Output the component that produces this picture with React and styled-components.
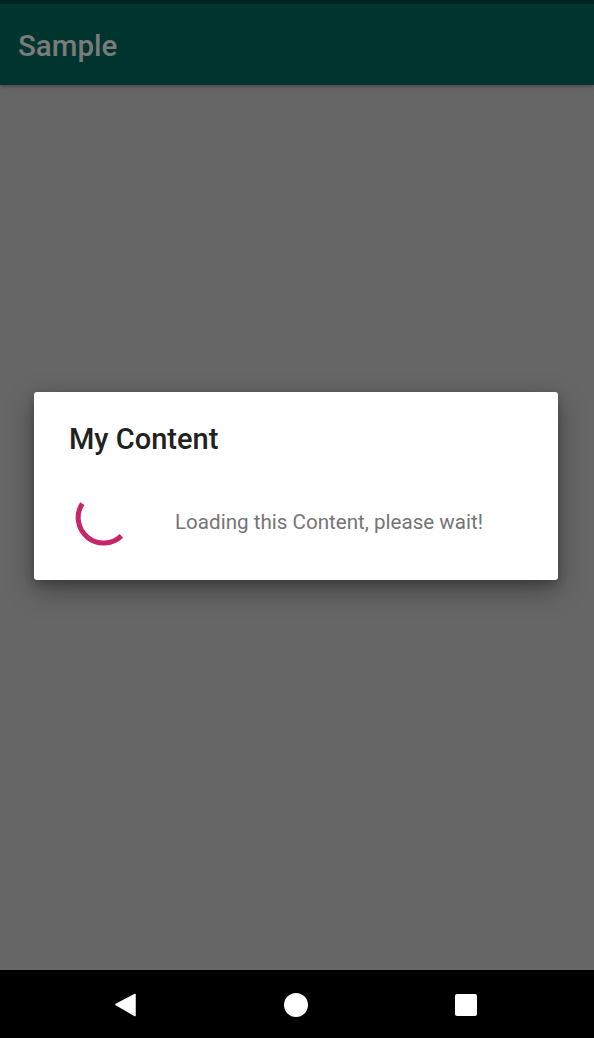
import React from 'react';
import styled, { createGlobalStyle } from 'styled-components';

const GlobalStyle = createGlobalStyle`
    html, body {
        margin: 0;
        padding: 0;
        background: #666666;
    }
    body {
        font-family: Roboto, 'Noto Sans', sans-serif;
    }
`;

const Screen = styled.div`
    width: 594px;
    height: 1038px;
    display: flex;
    flex-direction: column;
    background: #666666;
    overflow: hidden;
`;

const StatusBar = styled.div`
    height: 4px;
    background: #00231f;
    flex-shrink: 0;
`;

const AppBar = styled.header`
    height: 81px;
    flex-shrink: 0;
    display: flex;
    align-items: center;
    padding: 0 18px;
    background: #00352f;
    box-shadow: 0 2px 4px rgba(0, 0, 0, 0.25);
    position: relative;
    z-index: 1;
`;

const AppTitle = styled.h1`
    margin: 2px 0 0;
    font-size: 29.5px;
    font-weight: 500;
    color: #7b7b7b;
`;

const Content = styled.main`
    flex: 1;
    display: flex;
    flex-direction: column;
    align-items: center;
    padding-top: 307px;
`;

const Dialog = styled.div`
    width: 524px;
    height: 188px;
    box-sizing: border-box;
    background: #ffffff;
    border-radius: 3px;
    box-shadow: 0 10px 28px rgba(0, 0, 0, 0.35), 0 4px 10px rgba(0, 0, 0, 0.2);
    padding: 30px 35px 0;
    margin-left: -2px;
`;

const DialogTitle = styled.h2`
    margin: 0;
    font-size: 29px;
    font-weight: 500;
    color: #212121;
    line-height: 34px;
`;

const Body = styled.div`
    display: flex;
    align-items: center;
    margin-top: 36px;
`;

const Spinner = styled.svg`
    width: 60px;
    height: 60px;
    flex-shrink: 0;
    margin-left: 1px;
`;

const Message = styled.p`
    margin: 0 0 0 45px;
    font-size: 20.6px;
    color: #757575;
    line-height: 28px;
`;

const NavBar = styled.nav`
    height: 68px;
    flex-shrink: 0;
    background: #000000;
    display: flex;
    align-items: center;
    justify-content: space-between;
    padding: 0 116px 0 114px;
`;

const NavIcon = styled.svg`
    width: 24px;
    height: 24px;
    display: block;
    margin-top: 2px;
`;

const arc = (() => {
    const cx = 30;
    const cy = 30;
    const r = 25.5;
    const toXY = (deg) => {
        const a = (deg * Math.PI) / 180;
        return [cx + r * Math.cos(a), cy + r * Math.sin(a)];
    };
    const [sx, sy] = toXY(33);
    const [ex, ey] = toXY(226);
    return `M ${sx} ${sy} A ${r} ${r} 0 0 1 ${ex} ${ey}`;
})();

export default function App() {
    return (
        <>
            <GlobalStyle />
            <Screen>
                <StatusBar />
                <AppBar>
                    <AppTitle>Sample</AppTitle>
                </AppBar>
                <Content>
                    <Dialog>
                        <DialogTitle>My Content</DialogTitle>
                        <Body>
                            <Spinner viewBox='0 0 60 60'>
                                <path
                                    d={arc}
                                    fill='none'
                                    stroke='#c8246a'
                                    strokeWidth='5'
                                />
                            </Spinner>
                            <Message>Loading this Content, please wait!</Message>
                        </Body>
                    </Dialog>
                </Content>
                <NavBar>
                    <NavIcon viewBox='0 0 24 24'>
                        <path
                            d='M21 1.5 L2 11.5 L21 22.5 Z'
                            fill='#fff'
                            stroke='#fff'
                            strokeWidth='1.5'
                            strokeLinejoin='round'
                        />
                    </NavIcon>
                    <NavIcon viewBox='0 0 24 24'>
                        <circle cx='12' cy='12' r='12' fill='#fff' />
                    </NavIcon>
                    <NavIcon viewBox='0 0 24 24'>
                        <rect x='1' y='1' width='22' height='22' rx='2' fill='#fff' />
                    </NavIcon>
                </NavBar>
            </Screen>
        </>
    );
}
